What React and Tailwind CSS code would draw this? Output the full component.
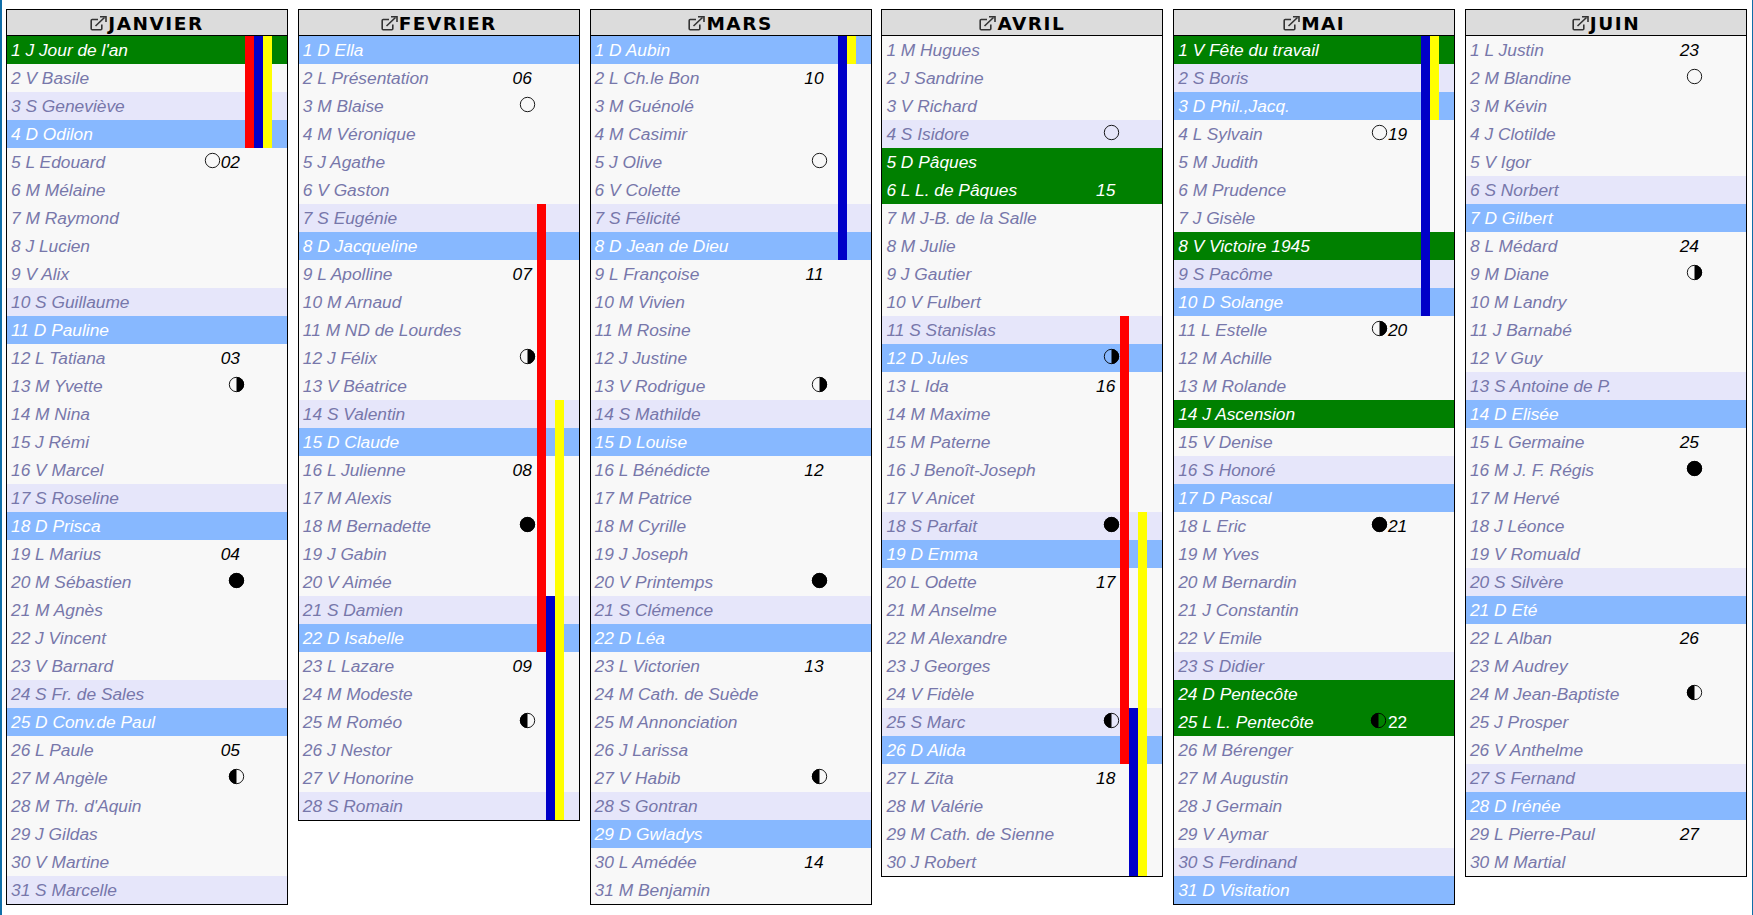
const MONTHS = [
  {
    name: 'JANVIER',
    days: "J Jour de l'an|V Basile|S Geneviève|D Odilon|L Edouard|M Mélaine|M Raymond|J Lucien|V Alix|S Guillaume|D Pauline|L Tatiana|M Yvette|M Nina|J Rémi|V Marcel|S Roseline|D Prisca|L Marius|M Sébastien|M Agnès|J Vincent|V Barnard|S Fr. de Sales|D Conv.de Paul|L Paule|M Angèle|M Th. d'Aquin|J Gildas|V Martine|S Marcelle",
    green: [1],
    weeks: { 5: '02', 12: '03', 19: '04', 26: '05' },
    moons: { 5: 'new', 13: 'first', 20: 'full', 27: 'last' },
    bars: [['red', 1, 4], ['blue', 1, 4], ['yellow', 1, 4]],
  },
  {
    name: 'FEVRIER',
    days: 'D Ella|L Présentation|M Blaise|M Véronique|J Agathe|V Gaston|S Eugénie|D Jacqueline|L Apolline|M Arnaud|M ND de Lourdes|J Félix|V Béatrice|S Valentin|D Claude|L Julienne|M Alexis|M Bernadette|J Gabin|V Aimée|S Damien|D Isabelle|L Lazare|M Modeste|M Roméo|J Nestor|V Honorine|S Romain',
    green: [],
    weeks: { 2: '06', 9: '07', 16: '08', 23: '09' },
    moons: { 3: 'new', 12: 'first', 18: 'full', 25: 'last' },
    bars: [['red', 7, 22], ['blue', 21, 28], ['yellow', 14, 28]],
  },
  {
    name: 'MARS',
    days: 'D Aubin|L Ch.le Bon|M Guénolé|M Casimir|J Olive|V Colette|S Félicité|D Jean de Dieu|L Françoise|M Vivien|M Rosine|J Justine|V Rodrigue|S Mathilde|D Louise|L Bénédicte|M Patrice|M Cyrille|J Joseph|V Printemps|S Clémence|D Léa|L Victorien|M Cath. de Suède|M Annonciation|J Larissa|V Habib|S Gontran|D Gwladys|L Amédée|M Benjamin',
    green: [],
    weeks: { 2: '10', 9: '11', 16: '12', 23: '13', 30: '14' },
    moons: { 5: 'new', 13: 'first', 20: 'full', 27: 'last' },
    bars: [['blue', 1, 8], ['yellow', 1, 1]],
  },
  {
    name: 'AVRIL',
    days: 'M Hugues|J Sandrine|V Richard|S Isidore|D Pâques|L L. de Pâques|M J-B. de la Salle|M Julie|J Gautier|V Fulbert|S Stanislas|D Jules|L Ida|M Maxime|M Paterne|J Benoît-Joseph|V Anicet|S Parfait|D Emma|L Odette|M Anselme|M Alexandre|J Georges|V Fidèle|S Marc|D Alida|L Zita|M Valérie|M Cath. de Sienne|J Robert',
    green: [5, 6],
    weeks: { 6: '15', 13: '16', 20: '17', 27: '18' },
    moons: { 4: 'new', 12: 'first', 18: 'full', 25: 'last' },
    bars: [['red', 11, 26], ['blue', 25, 30], ['yellow', 18, 30]],
  },
  {
    name: 'MAI',
    days: 'V Fête du travail|S Boris|D Phil.,Jacq.|L Sylvain|M Judith|M Prudence|J Gisèle|V Victoire 1945|S Pacôme|D Solange|L Estelle|M Achille|M Rolande|J Ascension|V Denise|S Honoré|D Pascal|L Eric|M Yves|M Bernardin|J Constantin|V Emile|S Didier|D Pentecôte|L L. Pentecôte|M Bérenger|M Augustin|J Germain|V Aymar|S Ferdinand|D Visitation',
    green: [1, 8, 14, 24, 25],
    weeks: { 4: '19', 11: '20', 18: '21', 25: '22' },
    moons: { 4: 'new', 11: 'first', 18: 'full', 25: 'last' },
    bars: [['blue', 1, 10], ['yellow', 1, 3]],
  },
  {
    name: 'JUIN',
    days: 'L Justin|M Blandine|M Kévin|J Clotilde|V Igor|S Norbert|D Gilbert|L Médard|M Diane|M Landry|J Barnabé|V Guy|S Antoine de P.|D Elisée|L Germaine|M J. F. Régis|M Hervé|J Léonce|V Romuald|S Silvère|D Eté|L Alban|M Audrey|M Jean-Baptiste|J Prosper|V Anthelme|S Fernand|D Irénée|L Pierre-Paul|M Martial',
    green: [],
    weeks: { 1: '23', 8: '24', 15: '25', 22: '26', 29: '27' },
    moons: { 2: 'new', 9: 'first', 16: 'full', 24: 'last' },
    bars: [],
  },
]

const BAR_STYLES = {
  red: { color: 'bg-[#ff0000]', left: 238 },
  blue: { color: 'bg-[#0000c8]', left: 247 },
  yellow: { color: 'bg-[#ffff00]', left: 256 },
}

function Moon({ phase }) {
  return (
    <svg width="17" height="17" viewBox="0 0 17 17" className="shrink-0 mb-[3px]">
      {phase === 'full' && <circle cx="8.5" cy="8.5" r="7.6" fill="#000" />}
      {phase === 'first' && <path d="M8.5 .9a7.6 7.6 0 0 1 0 15.2z" fill="#000" />}
      {phase === 'last' && <path d="M8.5 .9a7.6 7.6 0 0 0 0 15.2z" fill="#000" />}
      <circle cx="8.5" cy="8.5" r="7.2" fill="none" stroke="#000" strokeWidth="0.9" />
    </svg>
  )
}

function LinkIcon() {
  return (
    <svg width="18" height="15" viewBox="0 0 18 15" className="shrink-0" fill="none" stroke="#333" strokeWidth="1.6">
      <path d="M8 3.5H2.2a1 1 0 0 0-1 1v8.3a1 1 0 0 0 1 1h8.6a1 1 0 0 0 1-1V8.5" />
      <path d="M5.5 10L14.5 1.5" />
      <path d="M10 0.8h6v5.2" />
    </svg>
  )
}

function DayRow({ n, label, isGreen, week, moon }) {
  const letter = label[0]
  let bg = 'bg-[#f8f8f8]'
  let color = 'text-[#7777aa]'
  if (letter === 'S') bg = 'bg-[#e6e6fa]'
  if (letter === 'D') {
    bg = 'bg-[#87b8ff]'
    color = 'text-white'
  }
  if (isGreen) {
    bg = 'bg-[#008000]'
    color = 'text-white'
  }

  return (
    <div className={`flex items-center h-[28px] pl-[4px] pr-[47px] italic ${bg}`}>
      <span className={`flex-1 whitespace-nowrap pt-[2px] ${color}`}>
        {n} {label}
      </span>
      <span className={`flex items-center ${moon && !week ? '-mr-[4.5px]' : ''}`}>
        {moon && <Moon phase={moon} />}
        {week && (
          <span className={`pt-[2px] ${isGreen ? 'text-white' : 'text-black'} ${isGreen && moon ? 'not-italic pl-[1px]' : ''}`}>
            {week}
          </span>
        )}
      </span>
    </div>
  )
}

function Month({ month }) {
  const days = month.days.split('|')
  return (
    <div className="relative w-[282px] shrink-0 border border-black">
      <div className="flex items-center justify-center h-[26px] pt-[2px] bg-[#dcdcdc] border-b border-black font-['DejaVu_Sans',sans-serif] font-bold text-[18.5px] tracking-[1.5px] text-black">
        <LinkIcon />
        <span>{month.name}</span>
      </div>
      {days.map((label, i) => (
        <DayRow
          key={i}
          n={i + 1}
          label={label}
          isGreen={month.green.includes(i + 1)}
          week={month.weeks[i + 1]}
          moon={month.moons[i + 1]}
        />
      ))}
      {month.bars.map(([kind, from, to]) => (
        <div
          key={kind}
          className={`absolute w-[9px] ${BAR_STYLES[kind].color}`}
          style={{ left: BAR_STYLES[kind].left, top: 26 + (from - 1) * 28, height: (to - from + 1) * 28 }}
        />
      ))}
    </div>
  )
}

export default function App() {
  return (
    <div className="flex items-start gap-[9.8px] h-[915px] pt-[9px] pl-[4px] bg-white border-l-2 border-r border-[#0f6ea8] font-['Liberation_Sans',Arial,sans-serif] text-[17.33px] overflow-hidden">
      {MONTHS.map((month) => (
        <Month key={month.name} month={month} />
      ))}
    </div>
  )
}
